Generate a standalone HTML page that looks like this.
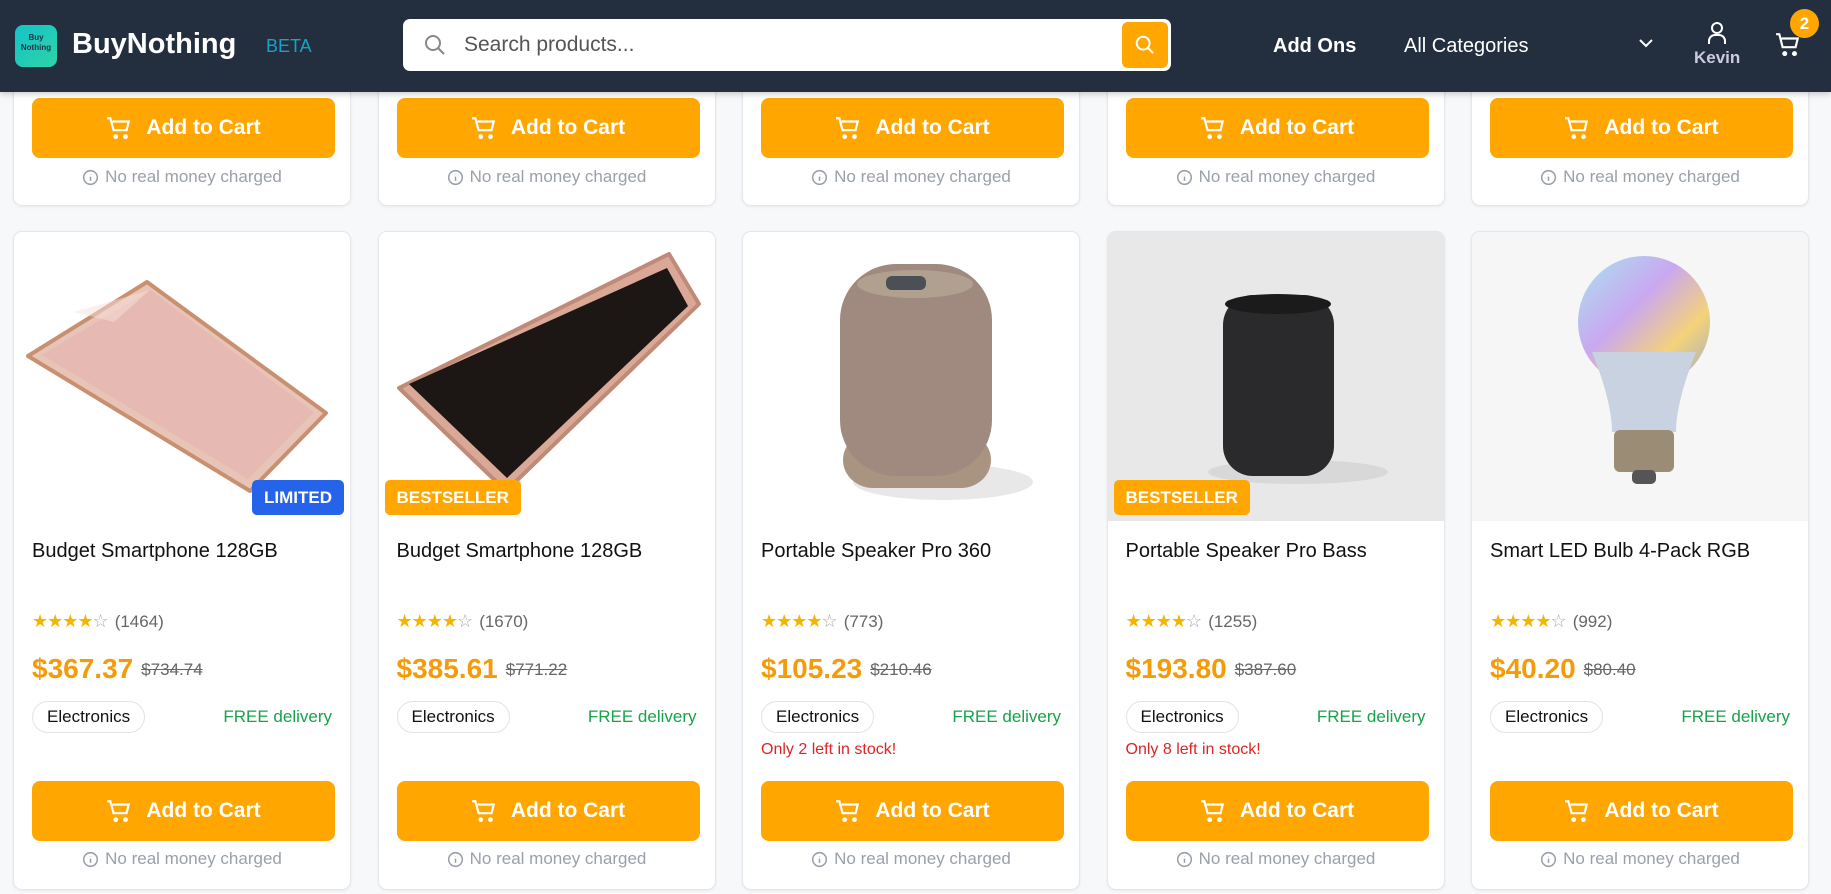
<!DOCTYPE html>
<html><head><meta charset="utf-8">
<style>
*{box-sizing:border-box;margin:0;padding:0}
body{width:1831px;height:894px;overflow:hidden;background:#f7f8fa;font-family:"Liberation Sans",sans-serif;position:relative}
.hdr{position:absolute;left:0;top:0;width:1831px;height:92px;background:#232f3f;z-index:5;box-shadow:0 2px 6px rgba(0,0,0,.2)}
.card{position:absolute;width:338px;background:#fff;border:1px solid #e4e6ea;border-radius:9px;overflow:hidden;box-shadow:0 1px 3px rgba(0,0,0,.06)}
.btn{position:absolute;left:18px;width:303px;height:60px;background:#ffa600;border-radius:8px;color:#fff;font-weight:bold;font-size:21px;display:flex;align-items:center;justify-content:center;gap:14px}
.note{position:absolute;left:0;width:100%;text-align:center;color:#9aa0aa;font-size:17px;display:flex;justify-content:center;align-items:center;gap:6px}
.img{position:absolute;left:0;top:0;width:338px;height:289px}
.title{position:absolute;left:18px;top:540px;font-size:20px;color:#111;font-weight:500}
.stars{position:absolute;left:18px;top:612px;font-size:18px;color:#f5b400;letter-spacing:-1px}
.stars span{color:#666;font-size:17px;letter-spacing:0;margin-left:6px}
.price{position:absolute;left:18px;top:652px;font-size:28px;font-weight:bold;color:#f59b0a}
.price s{font-size:17px;color:#666;font-weight:normal;margin-left:8px;vertical-align:3px}
.pill{position:absolute;left:18px;top:469px;height:32px;padding:0 14px;border:1px solid #e1e3e6;border-radius:16px;font-size:17px;color:#111;line-height:30px}
.free{position:absolute;right:18px;top:475px;font-size:17px;color:#16a34a}
.stock{position:absolute;left:18px;top:509px;font-size:16px;color:#dc2626}
.badge{position:absolute;top:248px;height:35px;padding:0 12px;border-radius:5px;color:#fff;font-weight:bold;font-size:17px;line-height:35px}
</style></head><body>
<div class="hdr">
  <div style="position:absolute;left:15px;top:25px;width:42px;height:42px;border-radius:8px;background:linear-gradient(135deg,#14c3c8,#2ed3a8);color:#234;font-size:8px;font-weight:bold;text-align:center;line-height:10px;padding-top:8px">Buy<br>Nothing</div>
  <div style="position:absolute;left:72px;top:28px;color:#fff;font-weight:bold;font-size:29px">BuyNothing</div>
  <div style="position:absolute;left:266px;top:36px;color:#17a2c8;font-size:18px">BETA</div>
  <div style="position:absolute;left:403px;top:19px;width:768px;height:52px;background:#fff;border-radius:7px">
    <svg style="position:absolute;left:20px;top:14px" width="24" height="24" viewBox="0 0 24 24" fill="none" stroke="#888" stroke-width="2"><circle cx="10" cy="10" r="7"/><path d="M15 15l6 6"/></svg>
    <div style="position:absolute;left:61px;top:14px;font-size:21px;color:#555">Search products...</div>
    <div style="position:absolute;right:3px;top:3px;width:46px;height:46px;background:#ffa600;border-radius:6px">
      <svg style="position:absolute;left:12px;top:12px" width="22" height="22" viewBox="0 0 24 24" fill="none" stroke="#fff" stroke-width="2.2"><circle cx="10" cy="10" r="7"/><path d="M15 15l6 6"/></svg>
    </div>
  </div>
  <div style="position:absolute;left:1273px;top:35px;color:#fff;font-weight:bold;font-size:20px">Add Ons</div>
  <div style="position:absolute;left:1404px;top:35px;color:#fff;font-size:20px">All Categories</div>
  <svg style="position:absolute;left:1637px;top:36px" width="18" height="14" viewBox="0 0 18 14" fill="none" stroke="#fff" stroke-width="2"><path d="M3 4l6 6 6-6"/></svg>
  <svg style="position:absolute;left:1705px;top:20px" width="24" height="26" viewBox="0 0 24 26" fill="none" stroke="#fff" stroke-width="2"><circle cx="12" cy="8" r="5"/><path d="M4 24v-3a6 6 0 0 1 6-6h4a6 6 0 0 1 6 6v3"/></svg>
  <div style="position:absolute;left:1694px;top:48px;color:#ccd;font-weight:bold;font-size:17px">Kevin</div>
  <svg style="position:absolute;left:1775px;top:32px" width="26" height="26" viewBox="0 0 24 24" fill="none" stroke="#fff" stroke-width="2"><path d="M1 2h3l3 12h12l2-8H6"/><circle cx="9" cy="20" r="1.3" fill="#fff"/><circle cx="18" cy="20" r="1.3" fill="#fff"/></svg>
  <div style="position:absolute;left:1790px;top:9px;width:29px;height:29px;border-radius:50%;background:#ffa600;color:#fff;font-weight:bold;font-size:17px;text-align:center;line-height:29px">2</div>
</div>

<!-- top row -->
<div id="top"></div>
<script>
const cart='<svg width="26" height="24" viewBox="0 0 24 22" fill="none" stroke="#fff" stroke-width="2"><path d="M1 2h3l3 11h12l2-8H6"/><circle cx="9" cy="19" r="1.2" fill="#fff"/><circle cx="18" cy="19" r="1.2" fill="#fff"/></svg>';
const info='<svg width="17" height="17" viewBox="0 0 20 20" fill="none" stroke="#9aa0aa" stroke-width="1.8"><circle cx="10" cy="10" r="8"/><path d="M10 9v5M10 6v.5"/></svg>';
const imgs=[
'<svg class="img" viewBox="0 0 338 289"><rect width="338" height="289" fill="#fff"/><polygon points="133,50 312,181 236,259 14,124" fill="#e8c4b6" stroke="#c89070" stroke-width="4" stroke-linejoin="round"/><polygon points="136,58 300,180 234,247 28,123" fill="#e6bab2"/><polygon points="136,58 100,90 60,80" fill="#f8e0dc" opacity=".5"/></svg>',
'<svg class="img" viewBox="0 0 338 289"><rect width="338" height="289" fill="#fff"/><polygon points="290,22 320,72 127,259 20,156 " fill="#d9a896" stroke="#c08a78" stroke-width="4" stroke-linejoin="round"/><polygon points="288,36 309,74 128,246 30,152" fill="#1c1614"/></svg>',
'<svg class="img" viewBox="0 0 338 289"><rect width="338" height="289" fill="#fff"/><ellipse cx="200" cy="250" rx="90" ry="18" fill="#e8e8e8"/><rect x="100" y="200" width="148" height="56" rx="30" fill="#a99482"/><rect x="97" y="32" width="152" height="212" rx="56" fill="#a08a80"/><ellipse cx="172" cy="52" rx="58" ry="14" fill="#b0a090"/><rect x="143" y="44" width="40" height="14" rx="6" fill="#4b4f56"/></svg>',
'<svg class="img" viewBox="0 0 338 289"><rect width="338" height="289" fill="#e8e8e8"/><ellipse cx="190" cy="240" rx="90" ry="12" fill="#d8d8d8"/><rect x="115" y="63" width="111" height="181" rx="30" fill="#2a2a2c"/><ellipse cx="170" cy="72" rx="53" ry="10" fill="#1b1b1c"/></svg>',
'<svg class="img" viewBox="0 0 338 289"><defs><linearGradient id="bl" x1="0" y1="0" x2="1" y2="1"><stop offset="0" stop-color="#a8e4f0"/><stop offset=".4" stop-color="#c9a8f0"/><stop offset=".7" stop-color="#f4d27a"/><stop offset="1" stop-color="#9ac"/></linearGradient></defs><rect width="338" height="289" fill="#f6f6f6"/><circle cx="172" cy="90" r="66" fill="url(#bl)"/><path d="M120 120 Q140 170 140 200 L204 200 Q204 170 224 120Z" fill="#c8d2e0"/><rect x="142" y="198" width="60" height="42" rx="6" fill="#9b8c76"/><rect x="160" y="238" width="24" height="14" rx="5" fill="#555"/></svg>'
];
const data=[
 ['Budget Smartphone 128GB','(1464)','$367.37','$734.74','',['LIMITED','#2563eb','r']],
 ['Budget Smartphone 128GB','(1670)','$385.61','$771.22','',['BESTSELLER','#ffa600','l']],
 ['Portable Speaker Pro 360','(773)','$105.23','$210.46','Only 2 left in stock!',null],
 ['Portable Speaker Pro Bass','(1255)','$193.80','$387.60','Only 8 left in stock!',['BESTSELLER','#ffa600','l']],
 ['Smart LED Bulb 4-Pack RGB','(992)','$40.20','$80.40','',null]];
let h='';
for(let i=0;i<5;i++){
 const x=13+i*364.5;
 h+=`<div class="card" style="left:${x}px;top:-20px;height:226px"><div class="btn" style="top:117px">${cart}Add to Cart</div><div class="note" style="top:186px">${info}No real money charged</div></div>`;
 const d=data[i];
 let b='';
 if(d[5]) b=`<div class="badge" style="background:${d[5][1]};${d[5][2]=='r'?'right:6px':'left:6px'}">${d[5][0]}</div>`;
 h+=`<div class="card" style="left:${x}px;top:231px;height:659px">${imgs[i]}${b}
 <div class="title" style="top:308px">${d[0]}</div>
 <div class="stars" style="top:379px">★★★★<span style="color:#aaa;margin:0;font-size:18px">☆</span><span>${d[1]}</span></div>
 <div class="price" style="top:421px">${d[2]}<s>${d[3]}</s></div>
 <div class="pill">Electronics</div><div class="free">FREE delivery</div>
 <div class="stock">${d[4]}</div>
 <div class="btn" style="top:549px">${cart}Add to Cart</div>
 <div class="note" style="top:617px">${info}No real money charged</div></div>`;
}
document.getElementById('top').outerHTML=h;
</script>
</body></html>
